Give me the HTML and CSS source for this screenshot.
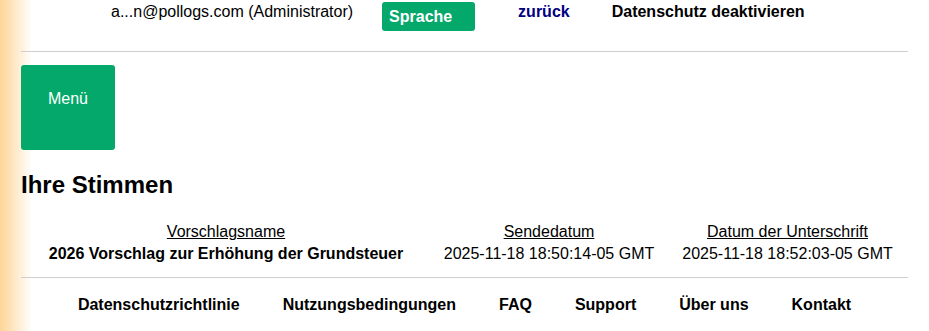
FILE: index.html
```html
<!DOCTYPE html>
<html lang="de">
<head>
<meta charset="utf-8">
<title>Ihre Stimmen</title>
<link rel="stylesheet" href="styles.css">
</head>
<body>
<div class="page">
  <header class="topbar">
    <span class="user">a...n@pollogs.com (Administrator)</span>
    <button class="lang">Sprache</button>
    <a class="back" href="#">zurück</a>
    <a class="privacy" href="#">Datenschutz deaktivieren</a>
  </header>
  <button class="menu">Menü</button>
  <h2 class="title">Ihre Stimmen</h2>
  <table class="votes">
    <colgroup>
      <col class="c1"><col class="c2"><col class="c3">
    </colgroup>
    <thead>
      <tr><th>Vorschlagsname</th><th>Sendedatum</th><th>Datum der Unterschrift</th></tr>
    </thead>
    <tbody>
      <tr><td class="name">2026 Vorschlag zur Erhöhung der Grundsteuer</td><td>2025-11-18 18:50:14-05 GMT</td><td>2025-11-18 18:52:03-05 GMT</td></tr>
    </tbody>
  </table>
  <footer class="footer">
    <a href="#">Datenschutzrichtlinie</a>
    <a href="#">Nutzungsbedingungen</a>
    <a href="#">FAQ</a>
    <a href="#">Support</a>
    <a href="#">Über uns</a>
    <a href="#">Kontakt</a>
  </footer>
</div>
</body>
</html>
```
FILE: styles.css
```css
html, body {
  margin: 0;
  height: 100%;
}
body {
  background: linear-gradient(to right, #fdd596 0, #fff 32px);
  font-family: "Liberation Sans", Arial, sans-serif;
  font-size: 16px;
  color: #000;
}
.page {
  padding: 0 21px;
}
.topbar {
  display: flex;
  align-items: flex-start;
  height: 48px;
  padding-top: 3px;
  padding-left: 90px;
  border-bottom: 1px solid #cfcfcf;
  line-height: 18px;
}
.user {
  margin-top: 0;
}
.lang {
  margin-top: -1px;
  margin-left: 29px;
  width: 93px;
  height: 29px;
  padding: 6px 7px 5px;
  border: 0;
  border-radius: 3px;
  background: #04a86b;
  color: #fff;
  font: bold 16px/18px "Liberation Sans", Arial, sans-serif;
  text-align: left;
}
.back {
  margin-left: 43px;
  color: #000080;
  font-weight: bold;
  text-decoration: none;
}
.privacy {
  margin-left: 42px;
  color: #000;
  font-weight: bold;
  text-decoration: none;
}
.menu {
  margin-top: 13px;
  width: 94px;
  height: 85px;
  padding: 25px 0 0;
  border: 0;
  border-radius: 3px;
  background: #04a86b;
  color: #fff;
  font: 16px/18px "Liberation Sans", Arial, sans-serif;
  display: flex;
  justify-content: center;
  align-items: flex-start;
}
.title {
  margin: 21px 0 0;
  font-size: 24px;
  line-height: 28px;
  font-weight: bold;
}
.votes {
  width: 100%;
  table-layout: fixed;
  border-collapse: collapse;
  margin-top: 22px;
  line-height: 18px;
}
.c1 { width: 410px; }
.c2 { width: 236px; }
.c3 { width: 241px; }
.votes th {
  font-weight: normal;
  text-decoration: underline;
  padding: 2px 0;
  text-align: center;
}
.votes td {
  padding: 2px 0;
  text-align: center;
  white-space: nowrap;
}
.votes td.name {
  font-weight: bold;
}
.footer {
  margin-top: 12px;
  border-top: 1px solid #cfcfcf;
  padding-top: 18px;
  display: flex;
  justify-content: center;
  gap: 43px;
  line-height: 18px;
}
.footer a {
  color: #000;
  font-weight: bold;
  text-decoration: none;
}
```
